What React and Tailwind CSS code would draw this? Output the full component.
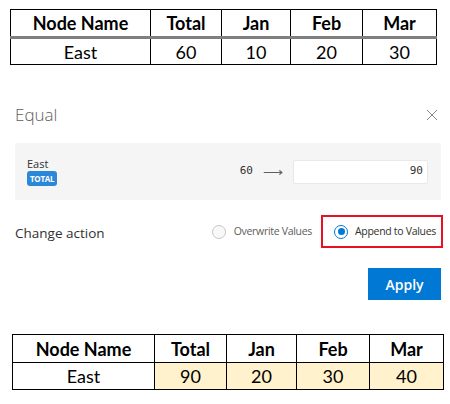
const cols = ['Node Name', 'Total', 'Jan', 'Feb', 'Mar']

function DataTable({ widths, values, highlight, thick }) {
  return (
    <table className="border-collapse border border-black text-[18px] text-black [font-family:Lato,'Liberation_Sans',sans-serif]">
      <thead>
        <tr className={thick ? 'border-b-[3px] border-b-[#7f7f7f]' : ''}>
          {cols.map((c, i) => (
            <th key={c} style={{ width: widths[i] }} className="h-[28px] border-x border-black p-0 text-center font-bold leading-none">
              {c}
            </th>
          ))}
        </tr>
      </thead>
      <tbody>
        <tr>
          {values.map((v, i) => (
            <td
              key={i}
              className={`h-[27px] border border-black p-0 text-center leading-none ${highlight && i > 0 ? 'bg-[#fff2cc]' : ''}`}
            >
              {v}
            </td>
          ))}
        </tr>
      </tbody>
    </table>
  )
}

function Radio({ checked }) {
  return (
    <span
      className={`flex h-[14px] w-[14px] shrink-0 items-center justify-center rounded-full border ${
        checked ? 'border-[#0078d4] bg-white' : 'border-[#c8c6c4] bg-[#f8f8f8]'
      }`}
    >
      {checked && <span className="h-[7px] w-[7px] rounded-full bg-[#0078d4]" />}
    </span>
  )
}

export default function App() {
  return (
    <div className="h-[404px] w-[450px] overflow-hidden bg-white">
      <div className="ml-[10px] pt-[9px]">
        <DataTable widths={[140, 71, 69, 72, 74]} values={['East', 60, 10, 20, 30]} thick />
      </div>

      {/* dialog */}
      <div className="mt-[41px] [font-family:'Open_Sans','Noto_Sans',sans-serif]">
        <div className="flex items-center justify-between pl-[15px] pr-[12px]">
          <span className="text-[17px] font-light leading-none text-[#605e5c]">Equal</span>
          <svg width="12" height="12" viewBox="0 0 12 12" className="text-[#8a8886]">
            <path d="M1 1L11 11M11 1L1 11" stroke="currentColor" strokeWidth="1" fill="none" />
          </svg>
        </div>

        <div className="mx-[15px] mt-[20px] flex h-[57px] w-[426px] items-center bg-[#f5f5f5] pl-[12px] pr-[13px]">
          <div className="flex flex-col items-start">
            <span className="text-[11px] leading-[13px] text-[#323130]">East</span>
            <span className="mt-[1px] rounded-[3px] bg-[#2b88d8] px-[3px] text-[8px] font-bold leading-[15px] tracking-[-0.3px] text-white">
              TOTAL
            </span>
          </div>
          <div className="ml-auto flex items-center">
            <span className="text-[11px] text-[#323130] [font-family:'DejaVu_Sans_Mono',monospace]">60</span>
            <span className="ml-[10px] text-[14px] leading-none text-[#605e5c]">⟶</span>
            <div className="ml-[10px] flex h-[24px] w-[135px] items-center justify-end rounded-[2px] border border-[#e8e8e8] bg-white pr-[4px] text-[11px] text-[#323130] [font-family:'DejaVu_Sans_Mono',monospace]">
              90
            </div>
          </div>
        </div>

        <div className="mt-[15px] flex items-center pl-[15px] pr-[7px]">
          <span className="mt-[4px] text-[13.5px] text-[#323130]">Change action</span>
          <div className="ml-auto flex items-center">
            <Radio />
            <span className="ml-[8px] whitespace-nowrap text-[10.5px] tracking-[-0.3px] text-[#605e5c]">Overwrite Values</span>
            <div className="ml-[9px] flex h-[33px] w-[122px] items-center border-2 border-[#e81123] pl-[11px]">
              <Radio checked />
              <span className="ml-[7px] whitespace-nowrap text-[10.5px] tracking-[-0.3px] text-[#323130]">Append to Values</span>
            </div>
          </div>
        </div>

        <div className="mt-[20px] flex justify-end pr-[9px]">
          <button className="h-[32px] w-[73px] bg-[#0078d4] text-[14px] font-semibold text-white">Apply</button>
        </div>
      </div>

      <div className="ml-[12px] mt-[34px]">
        <DataTable widths={[142, 72, 70, 73, 74]} values={['East', 90, 20, 30, 40]} highlight />
      </div>
    </div>
  )
}
